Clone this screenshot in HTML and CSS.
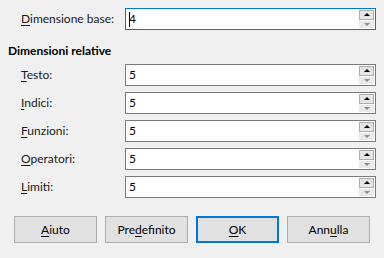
FILE: index.html
```html
<!DOCTYPE html>
<html>
<head>
<meta charset="utf-8">
<link rel="stylesheet" href="styles.css">
</head>
<body>
<div class="dialog">
  <div class="row">
    <span class="label"><u>D</u>imensione base:</span>
    <div class="spin focus">
      <span class="value"><span class="caret"></span>4</span>
      <span class="arrows"><span class="up"><i></i></span><span class="down"><i></i></span></span>
    </div>
  </div>
  <div class="heading">Dimensioni relative</div>
  <div class="rows">
    <div class="row">
      <span class="label"><u>T</u>esto:</span>
      <div class="spin"><span class="value">5</span><span class="arrows"><span class="up"><i></i></span><span class="down"><i></i></span></span></div>
    </div>
    <div class="row">
      <span class="label"><u>I</u>ndici:</span>
      <div class="spin"><span class="value">5</span><span class="arrows"><span class="up"><i></i></span><span class="down"><i></i></span></span></div>
    </div>
    <div class="row">
      <span class="label"><u>F</u>unzioni:</span>
      <div class="spin"><span class="value">5</span><span class="arrows"><span class="up"><i></i></span><span class="down"><i></i></span></span></div>
    </div>
    <div class="row">
      <span class="label"><u>O</u>peratori:</span>
      <div class="spin"><span class="value">5</span><span class="arrows"><span class="up"><i></i></span><span class="down"><i></i></span></span></div>
    </div>
    <div class="row">
      <span class="label"><u>L</u>imiti:</span>
      <div class="spin"><span class="value">5</span><span class="arrows"><span class="up"><i></i></span><span class="down"><i></i></span></span></div>
    </div>
  </div>
  <div class="buttons">
    <button class="btn"><u>A</u>iuto</button>
    <button class="btn">Pre<u>d</u>efinito</button>
    <button class="btn default"><u>O</u>K</button>
    <button class="btn">Ann<u>u</u>lla</button>
  </div>
</div>
</body>
</html>
```

FILE: styles.css
```css
html, body {
  margin: 0;
  padding: 0;
  background: #f0f0f0;
}
body {
  font-family: Lato, "Noto Sans", sans-serif;
  font-size: 12px;
  color: #000;
  width: 384px;
  height: 258px;
  overflow: hidden;
}
.dialog {
  padding-top: 8px;
}
u {
  text-decoration: underline;
  text-underline-offset: 2px;
}
.row {
  display: flex;
  align-items: center;
  height: 22px;
}
.label {
  width: 104px;
  margin-left: 21px;
  line-height: 16px;
  color: #1a1a1a;
}
.spin {
  width: 251px;
  height: 22px;
  box-sizing: border-box;
  border: 1px solid #7a7a7a;
  background: #fff;
  display: flex;
  align-items: stretch;
}
.spin.focus {
  border-color: #0078d7;
}
.value {
  flex: 1;
  padding-left: 3px;
  line-height: 20px;
  display: flex;
  align-items: center;
}
.caret {
  display: inline-block;
  width: 1px;
  height: 15px;
  background: #000;
  margin-right: -1px;
}
.arrows {
  width: 15px;
  margin: 1px 1px 1px 0;
  display: flex;
  flex-direction: column;
  gap: 1px;
}
.up, .down {
  flex: 1;
  box-sizing: border-box;
  display: flex;
  align-items: center;
  justify-content: center;
}
.up {
  background: #e5e5e5;
  border: 1px solid #adadad;
}
.down {
  background: #e9e9e9;
}
.up i {
  width: 0;
  height: 0;
  border-left: 3px solid transparent;
  border-right: 3px solid transparent;
  border-bottom: 3px solid #000;
}
.down i {
  width: 0;
  height: 0;
  border-left: 3px solid transparent;
  border-right: 3px solid transparent;
  border-top: 3px solid #8a8a8a;
}
.heading {
  font-weight: bold;
  margin: 13px 0 5px 8px;
  line-height: 16px;
}
.rows {
  display: flex;
  flex-direction: column;
  gap: 6px;
}
.buttons {
  display: flex;
  gap: 8px;
  margin-top: 18px;
  padding-left: 14px;
}
.btn {
  width: 83px;
  height: 27px;
  box-sizing: border-box;
  background: #e1e1e1;
  border: 1px solid #adadad;
  font-family: inherit;
  font-size: 12px;
  color: #000;
  padding: 0;
  margin: 0;
}
.btn.default {
  border: 2px solid #0078d7;
}
```
